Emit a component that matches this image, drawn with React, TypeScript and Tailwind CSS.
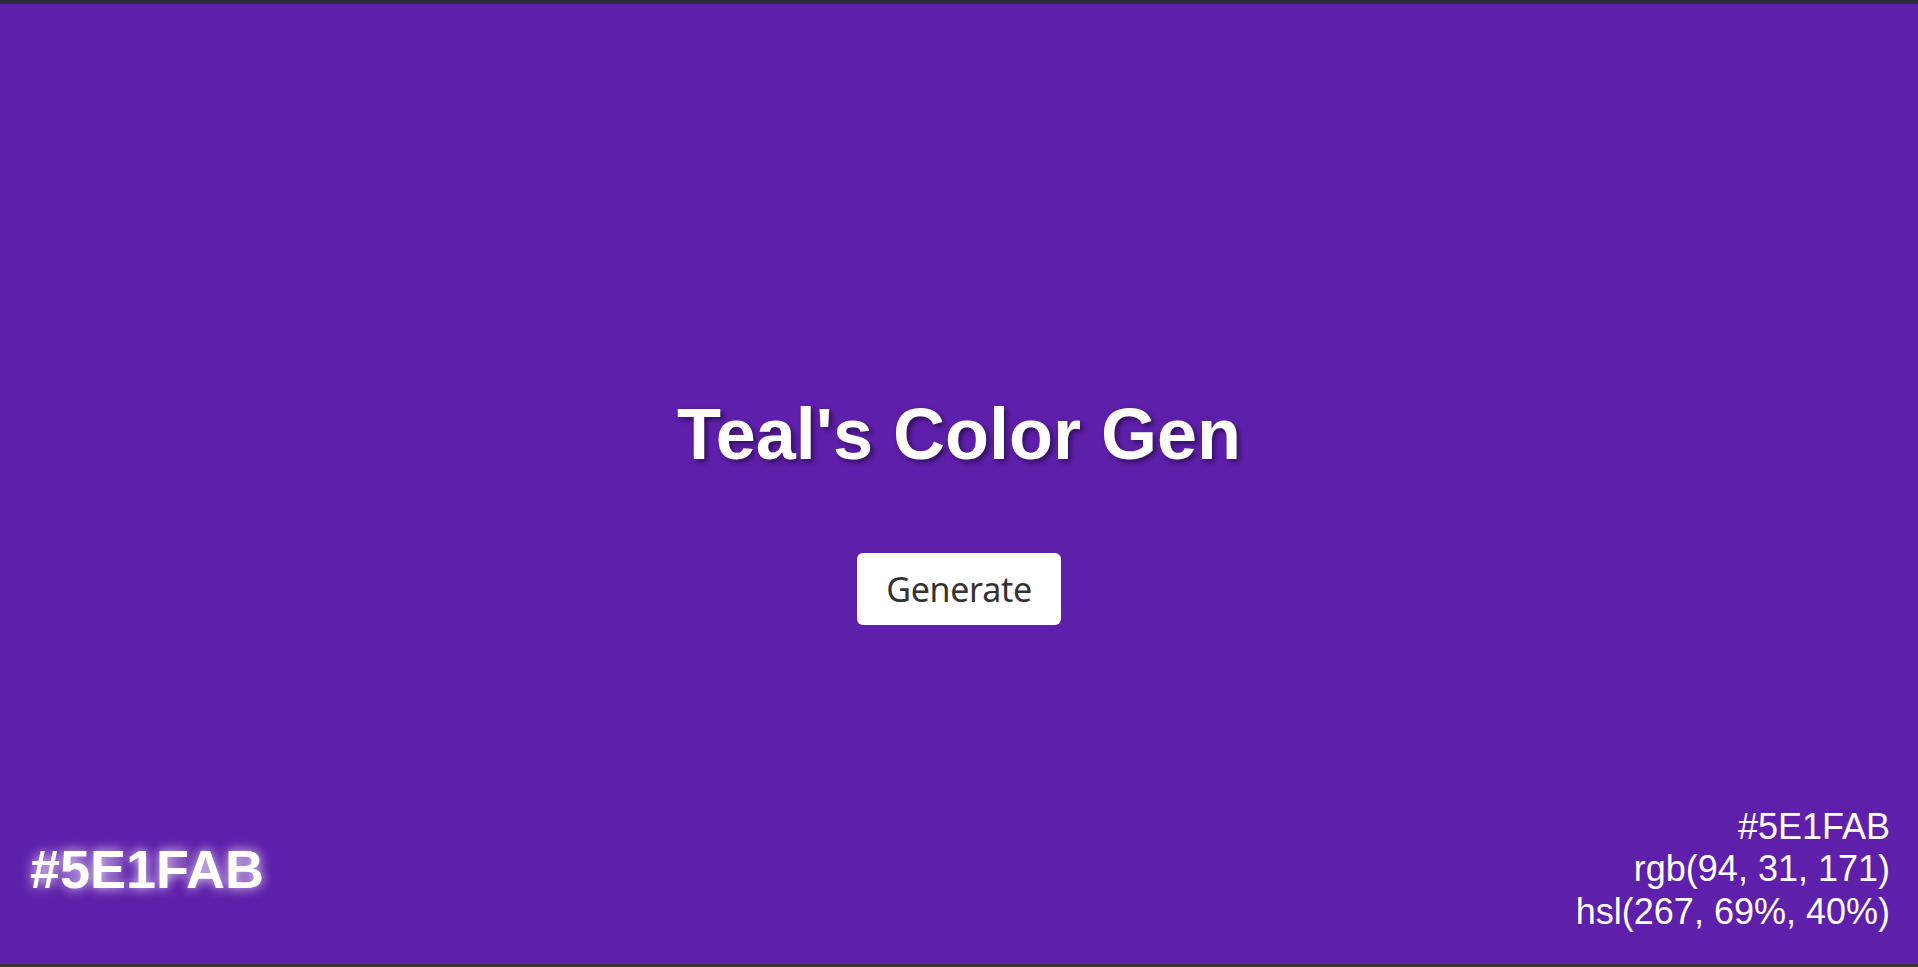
const HEX = '#5E1FAB'

export default function App() {
  return (
    <div
      className="flex h-screen flex-col border-t-4 border-b-[3px] border-t-[#2d2c35] border-b-[#35343c] bg-[#5e1fab] text-white"
      style={{ fontFamily: '"Liberation Sans", Arial, sans-serif' }}
    >
      <main className="flex flex-1 flex-col items-center justify-start pt-[394px]">
        <h1 className="text-[72px] font-bold leading-none [text-shadow:3px_3px_5px_rgba(0,0,0,0.45)]">
          Teal's Color Gen
        </h1>
        <button
          type="button"
          className="mt-[83px] flex h-[72px] w-[204px] items-center justify-center rounded-md bg-white text-[34px] tracking-[-0.3px] text-[#333]"
          style={{ fontFamily: '"Noto Sans", "Open Sans", sans-serif' }}
        >
          Generate
        </button>
      </main>

      <footer className="flex items-center justify-between pl-[30px] pr-[28px] pb-[31px]">
        <span className="text-[54px] font-bold [text-shadow:0_0_12px_rgba(255,255,255,0.9)]">
          {HEX}
        </span>
        <div className="flex flex-col items-end text-[36px] leading-[1.18]">
          <span>{HEX}</span>
          <span>rgb(94, 31, 171)</span>
          <span>hsl(267, 69%, 40%)</span>
        </div>
      </footer>
    </div>
  )
}
